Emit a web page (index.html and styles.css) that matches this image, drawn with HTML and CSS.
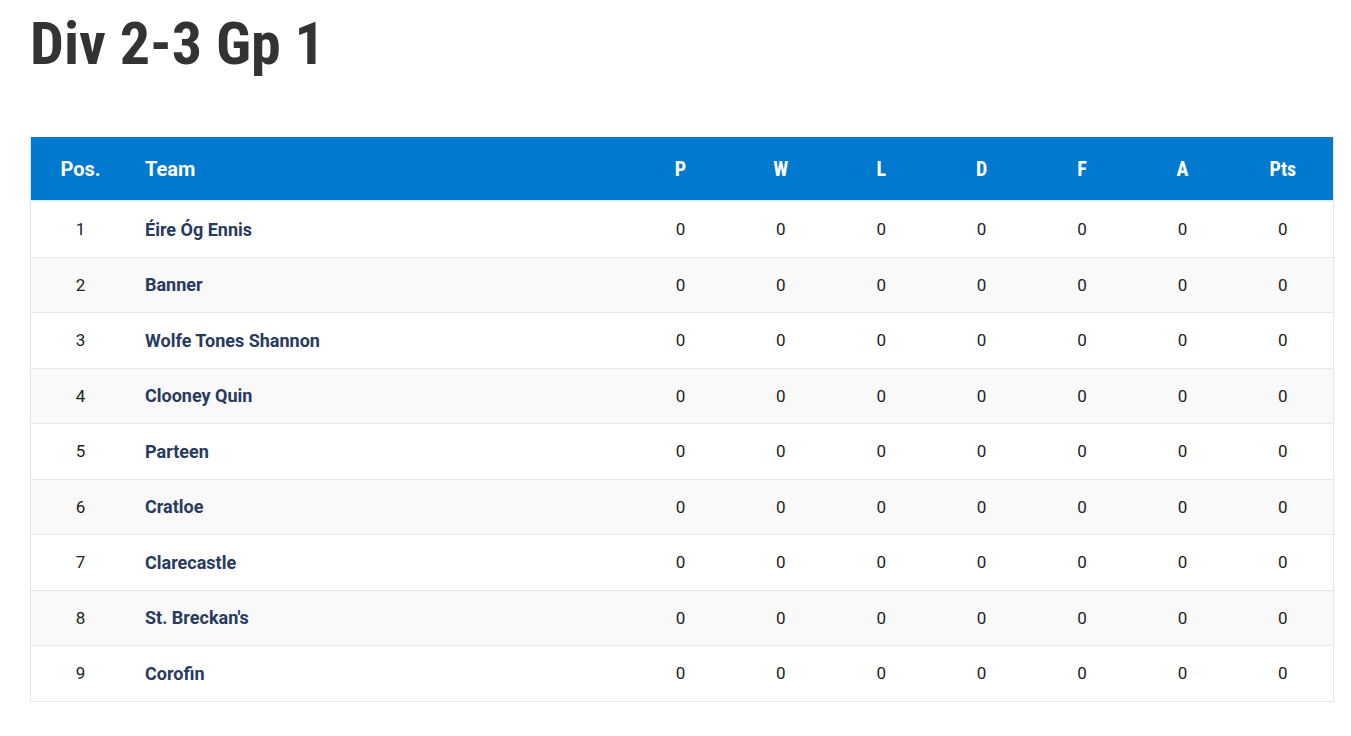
FILE: index.html
```html
<!DOCTYPE html>
<html lang="en">
<head>
  <meta charset="UTF-8" />
  <title>Div 2-3 Gp 1</title>
  <link rel="stylesheet" href="styles.css">
</head>
<body>

<h1 class="title">Div 2-3 Gp 1</h1>

<table class="league">
  <thead>
    <tr>
      <th class="pos">Pos.</th>
      <th class="team">Team</th>
      <th class="stat">P</th>
      <th class="stat">W</th>
      <th class="stat">L</th>
      <th class="stat">D</th>
      <th class="stat">F</th>
      <th class="stat">A</th>
      <th class="stat">Pts</th>
    </tr>
  </thead>
  <tbody>
    <tr><td class="pos">1</td><td class="team">Éire Óg Ennis</td><td class="stat">0</td><td class="stat">0</td><td class="stat">0</td><td class="stat">0</td><td class="stat">0</td><td class="stat">0</td><td class="stat">0</td></tr>
    <tr><td class="pos">2</td><td class="team">Banner</td><td class="stat">0</td><td class="stat">0</td><td class="stat">0</td><td class="stat">0</td><td class="stat">0</td><td class="stat">0</td><td class="stat">0</td></tr>
    <tr><td class="pos">3</td><td class="team">Wolfe Tones Shannon</td><td class="stat">0</td><td class="stat">0</td><td class="stat">0</td><td class="stat">0</td><td class="stat">0</td><td class="stat">0</td><td class="stat">0</td></tr>
    <tr><td class="pos">4</td><td class="team">Clooney Quin</td><td class="stat">0</td><td class="stat">0</td><td class="stat">0</td><td class="stat">0</td><td class="stat">0</td><td class="stat">0</td><td class="stat">0</td></tr>
    <tr><td class="pos">5</td><td class="team">Parteen</td><td class="stat">0</td><td class="stat">0</td><td class="stat">0</td><td class="stat">0</td><td class="stat">0</td><td class="stat">0</td><td class="stat">0</td></tr>
    <tr><td class="pos">6</td><td class="team">Cratloe</td><td class="stat">0</td><td class="stat">0</td><td class="stat">0</td><td class="stat">0</td><td class="stat">0</td><td class="stat">0</td><td class="stat">0</td></tr>
    <tr><td class="pos">7</td><td class="team">Clarecastle</td><td class="stat">0</td><td class="stat">0</td><td class="stat">0</td><td class="stat">0</td><td class="stat">0</td><td class="stat">0</td><td class="stat">0</td></tr>
    <tr><td class="pos">8</td><td class="team">St. Breckan's</td><td class="stat">0</td><td class="stat">0</td><td class="stat">0</td><td class="stat">0</td><td class="stat">0</td><td class="stat">0</td><td class="stat">0</td></tr>
    <tr><td class="pos">9</td><td class="team">Corofin</td><td class="stat">0</td><td class="stat">0</td><td class="stat">0</td><td class="stat">0</td><td class="stat">0</td><td class="stat">0</td><td class="stat">0</td></tr>
  </tbody>
</table>

</body>
</html>
```

FILE: styles.css
```css
body {
  font-family: Roboto, "Liberation Sans", sans-serif;
  margin: 0;
  padding: 0 18px 0 30px;
  background: #fff;
  color: #222;
}
.title {
  font-family: Roboto, "Liberation Sans", sans-serif;
  font-stretch: condensed;
  font-size: 60px;
  font-weight: 700;
  color: #333;
  margin: 6px 0 0 0;
  line-height: 76px;
  height: 131px;
}
.league {
  width: 1304px;
  border-collapse: collapse;
  table-layout: fixed;
  border: 1px solid #e6e6e6;
  border-top: none;
}
.league thead tr {
  background: #0079cf;
  color: #fff;
  border-bottom: 2px solid #e3edf4;
}
.league th {
  height: 63px;
  padding: 0;
  font-size: 20px;
  font-weight: 700;
}
.league th.stat {
  font-stretch: condensed;
}
.league td {
  height: 54.5px;
  padding: 0;
  font-size: 17px;
}
.league tbody tr {
  border-bottom: 1px solid #e8e8e8;
}
.league tbody tr:nth-child(even) {
  background: #f9f9f9;
}
.pos {
  width: 99px;
  text-align: center;
}
.team {
  text-align: left;
  padding-left: 15px !important;
}
td.team {
  font-size: 18px !important;
  font-weight: 700;
  color: #283a5e;
}
.stat {
  width: 100.4px;
  text-align: center;
}
```
